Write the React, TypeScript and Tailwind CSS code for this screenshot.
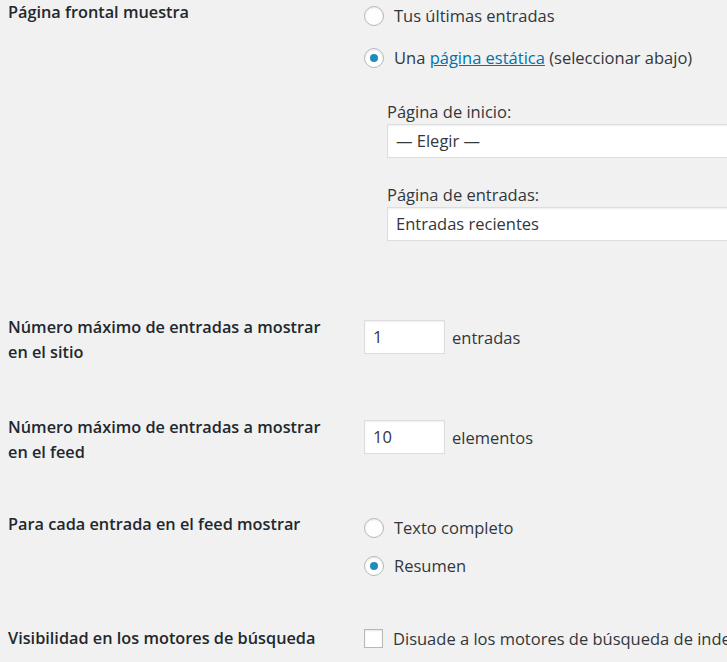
import React from 'react';

function Radio({ checked }: { checked?: boolean }) {
  return (
    <span className="inline-flex h-[20px] w-[20px] shrink-0 items-center justify-center rounded-full border border-[#b4b9be] bg-white shadow-[inset_0_1px_2px_rgba(0,0,0,0.1)]">
      {checked && <span className="h-[8px] w-[8px] rounded-full bg-[#1e8cbe]" />}
    </span>
  );
}

function RadioRow({ checked, children }: { checked?: boolean; children: React.ReactNode }) {
  return (
    <label className="flex h-[25px] items-center gap-[10px] whitespace-nowrap">
      <Radio checked={checked} />
      <span>{children}</span>
    </label>
  );
}

function Select({ value }: { value: string }) {
  return (
    <div className="h-[34px] w-[400px] border border-[#ddd] bg-white pl-[8px] leading-[32px] text-[#32373c] shadow-[inset_0_1px_2px_rgba(0,0,0,0.07)]">
      {value}
    </div>
  );
}

function NumberInput({ value }: { value: string }) {
  return (
    <div className="h-[34px] w-[81px] border border-[#ddd] bg-white pl-[8px] leading-[32px] text-[#32373c] shadow-[inset_0_1px_2px_rgba(0,0,0,0.07)]">
      {value}
    </div>
  );
}

const labelCls = 'w-[364px] shrink-0 pl-2 text-[16.3px] font-semibold text-[#23282d]';

export default function App() {
  return (
    <div
      className="h-[662px] w-[727px] overflow-hidden bg-[#f1f1f1] text-[16.5px] leading-[25px] text-[#32373c]"
      style={{ fontFamily: '"Open Sans", "Noto Sans", sans-serif' }}
    >
      {/* Página frontal */}
      <div className="flex">
        <div className={labelCls}>Página frontal muestra</div>
        <div className="flex flex-col pt-[3px]">
          <RadioRow>Tus últimas entradas</RadioRow>
          <div className="mt-[17px]">
            <RadioRow checked>
              Una{' '}
              <a href="#" className="text-[#0073aa] underline">
                página estática
              </a>{' '}
              (seleccionar abajo)
            </RadioRow>
          </div>
          <div className="mt-[29px] pl-[23px]">
            <div>Página de inicio:</div>
            <Select value="— Elegir —" />
            <div className="mt-[24px]">Página de entradas:</div>
            <Select value="Entradas recientes" />
          </div>
        </div>
      </div>

      {/* Entradas en el sitio */}
      <div className="mt-[74px] flex">
        <div className={labelCls}>
          Número máximo de entradas a mostrar
          <br />
          en el sitio
        </div>
        <div className="flex items-center gap-[7px] self-start pt-[5px]">
          <NumberInput value="1" />
          <span>entradas</span>
        </div>
      </div>

      {/* Entradas en el feed */}
      <div className="mt-[50px] flex">
        <div className={labelCls}>
          Número máximo de entradas a mostrar
          <br />
          en el feed
        </div>
        <div className="flex items-center gap-[7px] self-start pt-[5px]">
          <NumberInput value="10" />
          <span>elementos</span>
        </div>
      </div>

      {/* Feed */}
      <div className="mt-[47px] flex">
        <div className={labelCls}>Para cada entrada en el feed mostrar</div>
        <div className="flex flex-col pt-[3px]">
          <RadioRow>Texto completo</RadioRow>
          <div className="mt-[13px]">
            <RadioRow checked>Resumen</RadioRow>
          </div>
        </div>
      </div>

      {/* Visibilidad */}
      <div className="mt-[48px] flex">
        <div className={labelCls}>Visibilidad en los motores de búsqueda</div>
        <label className="flex items-center gap-[10px] whitespace-nowrap">
          <span className="h-[19px] w-[19px] shrink-0 border border-[#b4b9be] bg-white shadow-[inset_0_1px_2px_rgba(0,0,0,0.1)]" />
          <span>Disuade a los motores de búsqueda de indexar este sitio</span>
        </label>
      </div>
    </div>
  );
}
